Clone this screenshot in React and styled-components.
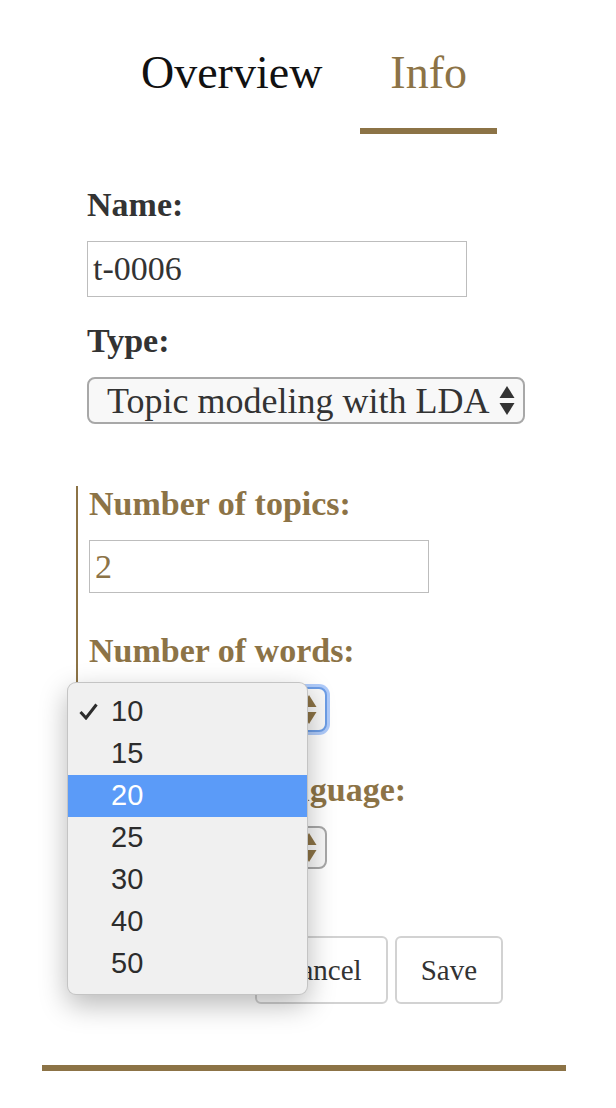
import React from 'react'
import styled, { createGlobalStyle } from 'styled-components'

const GOLD = '#8c7346'

const GlobalStyle = createGlobalStyle`
  body {
    margin: 0;
    background: #fff;
    font-family: "Liberation Serif", "Times New Roman", serif;
  }
`

const Page = styled.div`
  width: 608px;
  padding-top: 47px;
`

const Tabs = styled.nav`
  display: flex;
  justify-content: center;
  gap: 8px;
`

const Tab = styled.div`
  font-size: 46px;
  line-height: 52px;
  padding: 0 30px 29px;
  border-bottom: 6px solid ${p => (p.$active ? GOLD : 'transparent')};
  color: ${p => (p.$active ? GOLD : '#111')};
`

const Form = styled.form`
  margin: 53px 0 0 87px;
  display: flex;
  flex-direction: column;
  align-items: flex-start;
`

const Field = styled.div`
  display: flex;
  flex-direction: column;
  align-items: flex-start;
  margin-top: ${p => p.$top || 0}px;
`

const Label = styled.label`
  display: block;
  font-weight: bold;
  font-size: 34px;
  line-height: 36px;
  margin-bottom: 18px;
  color: ${p => p.$color || '#333'};
`

const TextInput = styled.input`
  box-sizing: border-box;
  width: ${p => p.$w}px;
  height: ${p => p.$h}px;
  border: 1px solid #bdbdbd;
  padding: 0 5px;
  font-family: inherit;
  font-size: 34px;
  color: ${p => p.$color || '#333'};
  background: #fff;
  outline: none;
`

const SelectBox = styled.div`
  box-sizing: border-box;
  width: ${p => p.$w}px;
  height: ${p => p.$h}px;
  display: flex;
  align-items: center;
  justify-content: space-between;
  padding: 0 8px 0 18px;
  background: #f8f8f8;
  border: 2px solid ${p => (p.$focus ? '#6c9de6' : '#a8a8a8')};
  border-radius: 8px;
  box-shadow: ${p => (p.$focus ? '0 0 0 3px rgba(110, 160, 245, 0.55)' : 'none')};
  font-size: 36px;
  color: ${p => p.$color || '#333'};
`

const Section = styled.section`
  margin: 62px 0 0 -11px;
  padding: 0 0 25px 11px;
  border-left: 2px solid ${GOLD};
  display: flex;
  flex-direction: column;
  align-items: flex-start;
`

const Anchor = styled.div`
  position: relative;
`

const Menu = styled.ul`
  position: absolute;
  left: -22px;
  top: -5px;
  width: 241px;
  margin: 0;
  padding: 8px 0 9px;
  list-style: none;
  box-sizing: border-box;
  background: #f0f0f0;
  border: 1px solid rgba(0, 0, 0, 0.18);
  border-radius: 9px;
  box-shadow: 0 10px 28px rgba(0, 0, 0, 0.28);
  font-family: "Liberation Sans", Arial, sans-serif;
  font-size: 29px;
  z-index: 2;
`

const MenuItem = styled.li`
  position: relative;
  height: 42px;
  line-height: 40px;
  padding-left: 43px;
  background: ${p => (p.$hot ? '#5b9bf8' : 'transparent')};
  color: ${p => (p.$hot ? '#fff' : '#2c2c2c')};
`

const Check = styled.svg`
  position: absolute;
  left: 11px;
  top: 12px;
`

const Buttons = styled.div`
  width: 416px;
  margin-top: 42px;
  display: flex;
  justify-content: flex-end;
  gap: 7px;
`

const Button = styled.button`
  height: 68px;
  padding: 0 24px;
  background: #fff;
  border: 2px solid #d2d2d2;
  border-radius: 6px;
  font-family: inherit;
  font-size: 29px;
  color: #333;
`

const Rule = styled.hr`
  margin: 61px 42px 0;
  height: 6px;
  border: none;
  background: ${GOLD};
`

function Arrows({ color }) {
  return (
    <svg width="16" height="29" viewBox="0 0 16 29">
      <path d="M8 0 L15.5 12 H0.5 Z" fill={color} />
      <path d="M0.5 17 H15.5 L8 29 Z" fill={color} />
    </svg>
  )
}

const wordOptions = ['10', '15', '20', '25', '30', '40', '50']

export default function App() {
  return (
    <>
      <GlobalStyle />
      <Page>
        <Tabs>
          <Tab>Overview</Tab>
          <Tab $active>Info</Tab>
        </Tabs>

        <Form onSubmit={e => e.preventDefault()}>
          <Field>
            <Label htmlFor="name">Name:</Label>
            <TextInput id="name" $w={380} $h={56} defaultValue="t-0006" />
          </Field>
          <Field $top={26}>
            <Label>Type:</Label>
            <SelectBox $w={438} $h={47}>
              <span>Topic modeling with LDA</span>
              <Arrows color="#333" />
            </SelectBox>
          </Field>

          <Section>
            <Field>
              <Label $color={GOLD} htmlFor="topics">Number of topics:</Label>
              <TextInput id="topics" $w={340} $h={53} $color={GOLD} defaultValue="2" />
            </Field>
            <Field $top={40}>
              <Label $color={GOLD}>Number of words:</Label>
              <Anchor>
                <SelectBox $w={238} $h={45} $focus $color={GOLD}>
                  <span>10</span>
                  <Arrows color={GOLD} />
                </SelectBox>
                <Menu>
                  {wordOptions.map(opt => (
                    <MenuItem key={opt} $hot={opt === '20'}>
                      {opt === '10' && (
                        <Check width="19" height="17" viewBox="0 0 19 17">
                          <path d="M1.5 9 L7 15 L17.5 1.5" fill="none" stroke="#2c2c2c" strokeWidth="3" />
                        </Check>
                      )}
                      {opt}
                    </MenuItem>
                  ))}
                </Menu>
              </Anchor>
            </Field>
            <Field $top={40}>
              <Label $color={GOLD}>Vocabulary language:</Label>
              <SelectBox $w={238} $h={43} $color={GOLD}>
                <span>English</span>
                <Arrows color={GOLD} />
              </SelectBox>
            </Field>
          </Section>

          <Buttons>
            <Button type="button">Cancel</Button>
            <Button type="submit">Save</Button>
          </Buttons>
        </Form>

        <Rule />
      </Page>
    </>
  )
}
